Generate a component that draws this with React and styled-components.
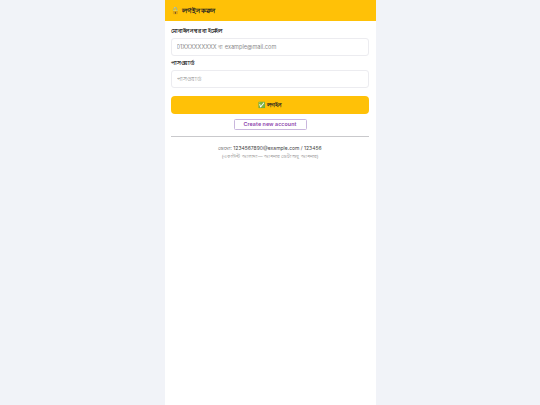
import React from 'react';
import styled, { createGlobalStyle } from 'styled-components';

const Global = createGlobalStyle`
  html, body { margin: 0; padding: 0; background: #f1f3f8; }
  body { font-family: Inter, "Noto Sans", "Noto Sans CJK SC", sans-serif; }
  * { box-sizing: border-box; }
`;

const Page = styled.div`
  width: 211px;
  min-height: 405px;
  margin: 0 auto;
  background: #fff;
`;
const Header = styled.header`
  height: 21px;
  background: #ffc107;
  display: flex;
  align-items: center;
  gap: 2px;
  padding: 0 6px;
  font-size: 7px;
  font-weight: 700;
  color: #222;
`;
const Form = styled.form`
  padding: 6.5px 6.5px 0;
  display: flex;
  flex-direction: column;
`;
const Label = styled.label`
  font-size: 5.5px;
  font-weight: 700;
  letter-spacing: -0.2px;
  color: #222;
  line-height: 7px;
  margin-bottom: 1.5px;
  height: 9px;
`;
const Input = styled.input`
  height: 17.5px;
  border: 1px solid #ececf0;
  border-radius: 3px;
  padding: 0 4.5px;
  font-family: inherit;
  font-size: 5.6px;
  margin-bottom: 4px;
  background: #fff;
  &::placeholder { color: #8a8a8a; opacity: 1; }
`;
const Submit = styled.button`
  height: 18px;
  margin-top: 4.5px;
  padding: 0;
  border: none;
  border-radius: 4px;
  background: #ffc107;
  font-family: inherit;
  font-size: 6px;
  font-weight: 700;
  color: #222;
`;
const CreateWrap = styled.div`
  display: flex;
  justify-content: center;
  margin-top: 4.5px;
`;
const Create = styled.a`
  width: 73px;
  height: 11.5px;
  border: 1px solid #c9b6dd;
  border-radius: 1.5px;
  font-size: 5.3px;
  font-weight: 600;
  letter-spacing: 0.1px;
  color: #8e44ad;
  display: flex;
  align-items: center;
  justify-content: center;
`;
const Divider = styled.hr`
  border: none;
  border-top: 1px solid #c9c9cc;
  margin: 6px 0 0;
`;
const Demo = styled.div`
  text-align: center;
  font-size: 5px;
  color: #444;
  margin-top: 7.5px;
  line-height: 7px;
`;
const Note = styled.div`
  text-align: center;
  font-size: 4.6px;
  color: #888;
  margin-top: 1.5px;
  line-height: 7px;
`;

export default function App() {
  return (
    <>
      <Global />
      <Page>
        <Header><span>🔒</span><span>লগইন করুন</span></Header>
        <Form onSubmit={(e) => e.preventDefault()}>
          <Label>মোবাইল নম্বর বা ইমেইল</Label>
          <Input placeholder="01XXXXXXXXX বা example@mail.com" />
          <Label>পাসওয়ার্ড</Label>
          <Input type="password" placeholder="পাসওয়ার্ড" />
          <Submit>✅ লগইন</Submit>
          <CreateWrap><Create>Create new account</Create></CreateWrap>
          <Divider />
          <Demo>ডেমো: 1234567890@example.com / 123456</Demo>
          <Note>(একাউন্ট আলাদা — আপনার ডেটা শুধু আপনার)</Note>
        </Form>
      </Page>
    </>
  );
}
